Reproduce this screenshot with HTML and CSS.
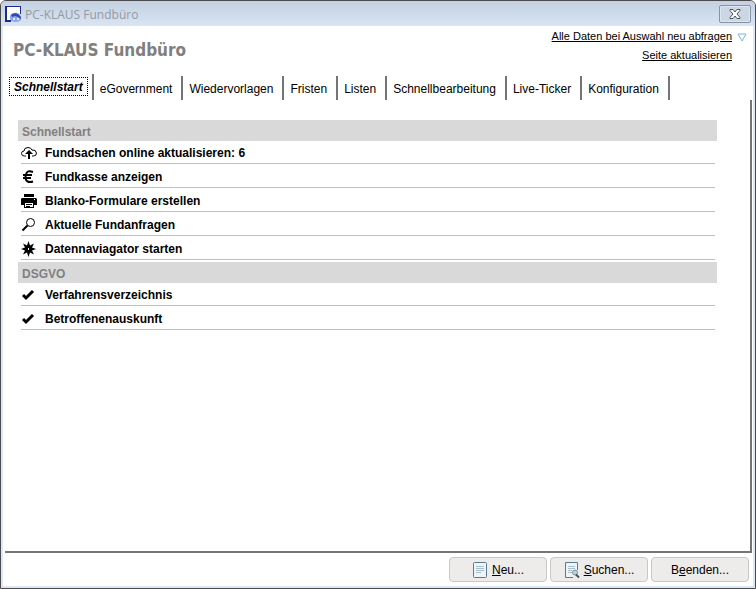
FILE: index.html
```html
<!DOCTYPE html>
<html lang="de">
<head>
  <meta charset="UTF-8">
  <meta name="viewport" content="width=device-width, initial-scale=1.0">
  <title>PC-KLAUS Fundbüro</title>
  <link rel="stylesheet" href="styles.css">
</head>
<body>
  <div class="window">
    <header class="titlebar">
      <svg class="app-icon" width="16" height="16" viewBox="0 0 16 16">
        <path d="M0 0h16v8h-1V1H2v13h4v2H0z" fill="#1a2a94"/>
        <path d="M2 1h13v7l-4-2-4 2-2 4v2H2z" fill="#fff"/>
        <path d="M5 10q1-3 5-3 5 0 6 4v3q-2 2-5 2-5 0-6-3z" fill="#8ba6ea"/>
        <path d="M6 9q3-3 7-1l3 3v2l-3-2-3-1-3 1z" fill="#3048b0"/>
        <path d="M8 12h2v2H8zM12 12h2v2h-2z" fill="#e0ecff"/>
      </svg>
      <span class="titlebar-text">PC-KLAUS Fundbüro</span>
      <button class="close" type="button" aria-label="Schließen">
        <svg width="12" height="10" viewBox="0 0 12 10">
          <path d="M1 .5h3L6 3l2-2.500h3v1L8 5l3 3.500v1H8L6 7 4 9.500H1v-1L4 5 1 1.500z" fill="#fff" stroke="#4b515b"/>
        </svg>
      </button>
    </header>

    <main class="content">
      <div class="head">
        <h1>PC-KLAUS Fundbüro</h1>
        <div class="head-links">
          <a href="#">Alle Daten bei Auswahl neu abfragen</a>
          <a href="#">Seite aktualisieren</a>
        </div>
        <svg class="arrow" width="10" height="9" viewBox="0 0 10 9">
          <path d="M1 1h8L5 8z" fill="#fff" stroke="#7ab8dc"/>
        </svg>
      </div>

      <nav class="tabs">
        <button class="tab active" type="button"><span>Schnellstart</span></button>
        <button class="tab" type="button">eGovernment</button>
        <button class="tab" type="button">Wiedervorlagen</button>
        <button class="tab" type="button">Fristen</button>
        <button class="tab" type="button">Listen</button>
        <button class="tab" type="button">Schnellbearbeitung</button>
        <button class="tab" type="button">Live-Ticker</button>
        <button class="tab" type="button">Konfiguration</button>
      </nav>

      <div class="panel">
        <section>
          <h2>Schnellstart</h2>
          <ul>
            <li><a href="#">
              <svg width="16" height="16" viewBox="0 0 16 16">
                <path d="M5 11H3.500Q.5 11 .5 8.500T3 6Q3 2.500 7 2.500q3 0 4 2.500 4-.5 4.500 3 0 3-3 3H11" fill="none" stroke="#000"/>
                <path d="M8 5l4 4H9v5H7V9H4z"/>
              </svg>
              Fundsachen online aktualisieren: 6</a></li>
            <li><a href="#">
              <svg width="16" height="16" viewBox="0 0 16 16">
                <path d="M12 3Q6 .5 5 5.500q-1.500 5 1.500 7 2.500 1 5.500 0M2 6h9M2 9h8" fill="none" stroke="#000" stroke-width="2"/>
              </svg>
              Fundkasse anzeigen</a></li>
            <li><a href="#">
              <svg width="16" height="16" viewBox="0 0 16 16">
                <path d="M3 1h10v3H3zM1 5h14l1 1v6H0V6z"/>
                <path d="M3 9h10v6H3z"/>
                <path d="M4 10h8v4H4z" fill="#fff"/>
                <path d="M5 11h6v1H5zM5 13h4v1H5z"/>
                <path d="M13 6h1v1h-1z" fill="#fff"/>
              </svg>
              Blanko-Formulare erstellen</a></li>
            <li><a href="#">
              <svg width="16" height="16" viewBox="0 0 16 16">
                <circle cx="9.500" cy="5.500" r="4" fill="none" stroke="#000"/>
                <path d="M6.500 8.500l-5 5" stroke="#000" stroke-width="2"/>
              </svg>
              Aktuelle Fundanfragen</a></li>
            <li><a href="#">
              <svg width="16" height="16" viewBox="0 0 16 16">
                <path d="M7.500 0L9 4.500 13 2.500 11 6.500 15 8 11 9.500 13 13.500 9 11.500 7.500 16 6 11.500 2 13.500 4 9.500 0 8 4 6.500 2 2.500 6 4.500z"/>
                <path d="M7 7h1v2H7z" fill="#fff"/>
              </svg>
              Datennaviagator starten</a></li>
          </ul>
        </section>
        <section>
          <h2>DSGVO</h2>
          <ul>
            <li><a href="#">
              <svg width="16" height="16" viewBox="0 0 16 16">
                <path d="M2 8l3 3 7-7" fill="none" stroke="#000" stroke-width="3"/>
              </svg>
              Verfahrensverzeichnis</a></li>
            <li><a href="#">
              <svg width="16" height="16" viewBox="0 0 16 16">
                <path d="M2 8l3 3 7-7" fill="none" stroke="#000" stroke-width="3"/>
              </svg>
              Betroffenenauskunft</a></li>
          </ul>
        </section>
      </div>
    </main>

    <footer class="buttons">
      <button type="button">
        <svg width="16" height="18" viewBox="0 0 16 18">
          <rect x="1.500" y="1.500" width="13" height="15" rx="1" fill="#eef3f6" stroke="#587b8f"/>
          <path d="M4 5.500h8M4 7.500h8M4 9.500h8M4 11.500h5" stroke="#aabfcb"/>
        </svg>
        <span><u>N</u>eu...</span>
      </button>
      <button type="button">
        <svg width="16" height="18" viewBox="0 0 16 18">
          <path d="M9 16.500H1.500v-15h12V9" fill="#eef3f6" stroke="#587b8f"/>
          <path d="M4 5.500h7M4 7.500h7M4 9.500h4M4 11.500h4" stroke="#aabfcb"/>
          <circle cx="11" cy="11.500" r="2.500" fill="#b9cfdc" stroke="#8295a1"/>
          <path d="M12 13.500l3 3" stroke="#46525c" stroke-width="2"/>
        </svg>
        <span><u>S</u>uchen...</span>
      </button>
      <button type="button"><span>B<u>e</u>enden...</span></button>
    </footer>
  </div>
</body>
</html>
```
FILE: styles.css
```css
* {
  box-sizing: border-box;
}
body {
  margin: 0;
  font-family: "Liberation Sans", Arial, sans-serif;
  font-size: 12px;
  line-height: 16px;
  color: #000;
  background: #fff;
}
button {
  font: inherit;
  color: inherit;
}
a {
  color: inherit;
}
svg {
  flex-shrink: 0;
}
.window {
  display: flex;
  flex-direction: column;
  min-height: 100vh;
  border: 1px solid #4a4a4f;
  border-radius: 6px 6px 0 0;
  box-shadow: inset 0 0 0 2px #dce8f5;
}
.titlebar {
  display: flex;
  align-items: center;
  height: 25px;
  padding: 1px 4px 0;
  border-radius: 5px 5px 0 0;
  background: linear-gradient(#c3d0e0, #d9e5f3);
}
.titlebar-text {
  flex: 1;
  margin-left: 4px;
  padding-top: 2px;
  font-family: "Open Sans", sans-serif;
  color: #949aa3;
}
.close {
  display: flex;
  align-items: center;
  justify-content: center;
  width: 32px;
  height: 18px;
  padding: 0;
  border: 1px solid #8792a2;
  border-radius: 2px;
  background: #cbd7e5;
  box-shadow: inset 0 0 0 1px #dde6f0;
}
.content {
  flex: 1;
  display: flex;
  flex-direction: column;
  padding: 2px 3px 0 4px;
}
.head {
  display: flex;
  align-items: flex-start;
  padding: 0 5px 0 8px;
}
h1 {
  flex: 1;
  margin: 12px 0 0;
  font-family: "DejaVu Sans Condensed", Tahoma, sans-serif;
  font-size: 17px;
  line-height: 20px;
  color: #808080;
}
.head-links {
  display: flex;
  flex-direction: column;
  align-items: flex-end;
  gap: 3px;
  font-size: 11px;
}
.arrow {
  margin: 5px 0 0 5px;
}
.tabs {
  display: flex;
  align-items: flex-end;
  margin-top: 11px;
}
.tab {
  height: 24px;
  padding: 2px 9px 0 6px;
  border: 0;
  border-right: 2px solid #757575;
  background: none;
}
.tab.active {
  height: 26px;
  padding: 0 4px 2px;
  font-weight: bold;
  font-style: italic;
}
.tab.active span {
  display: block;
  padding: 1px 4px 0;
  border: 1px dotted #000;
}
.panel {
  flex: 1;
  padding: 20px 33px 0 13px;
  border-right: 2px solid #757575;
  border-bottom: 2px solid #757575;
}
h2 {
  margin: 0;
  padding: 4px 4px 1px;
  background: #d9d9d9;
  font-size: 12px;
  color: #808080;
}
ul {
  margin: -1px 2px 2px 3px;
  padding: 0;
  list-style: none;
}
li {
  border-bottom: 1px solid #c0c0c0;
}
li a {
  display: flex;
  align-items: center;
  gap: 8px;
  height: 23px;
  padding-top: 3px;
  font-weight: bold;
  text-decoration: none;
}
.buttons {
  display: flex;
  justify-content: flex-end;
  gap: 3px;
  padding: 4px 6px 6px;
}
.buttons button {
  display: flex;
  align-items: center;
  justify-content: center;
  gap: 4px;
  width: 98px;
  height: 25px;
  padding: 0;
  border: 1px solid #c8c8c8;
  border-radius: 4px;
  background: #edecea;
}
```
